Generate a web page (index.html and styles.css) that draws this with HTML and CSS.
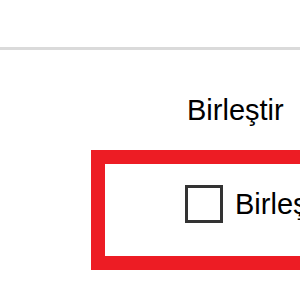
FILE: index.html
```html
<!DOCTYPE html>
<html lang="tr">
<head>
<meta charset="utf-8">
<link rel="stylesheet" href="styles.css">
</head>
<body>
<div class="topbar"></div>
<div class="rule"></div>
<main class="content">
  <h2 class="title">Birleştir</h2>
  <div class="highlight">
    <label class="option"><span class="box"></span><span class="label">Birleştir</span></label>
  </div>
</main>
</body>
</html>
```
FILE: styles.css
```css
html, body {
  margin: 0;
  padding: 0;
  width: 300px;
  height: 300px;
  overflow: hidden;
  background: #ffffff;
}
body {
  font-family: "Liberation Sans", Arial, sans-serif;
  color: #000000;
}
.topbar {
  height: 47px;
}
.rule {
  height: 3px;
  background: #dadada;
}
.content {
  display: flex;
  flex-direction: column;
  overflow: hidden;
}
.title {
  margin: 40px 0 0 187px;
  font-size: 29px;
  font-weight: normal;
  line-height: 40px;
  white-space: nowrap;
}
.highlight {
  margin-top: 20px;
  margin-left: 91px;
  width: 300px;
  height: 71px;
  border: 14px solid #ed1c24;
  box-sizing: content-box;
  padding: 21px 0 0 80px;
}
.option {
  display: flex;
  align-items: center;
  gap: 12px;
  white-space: nowrap;
  font-size: 29px;
  line-height: 38px;
}
.box {
  width: 32px;
  height: 32px;
  border: 3px solid #333333;
  background: #ffffff;
  flex: none;
}
```
